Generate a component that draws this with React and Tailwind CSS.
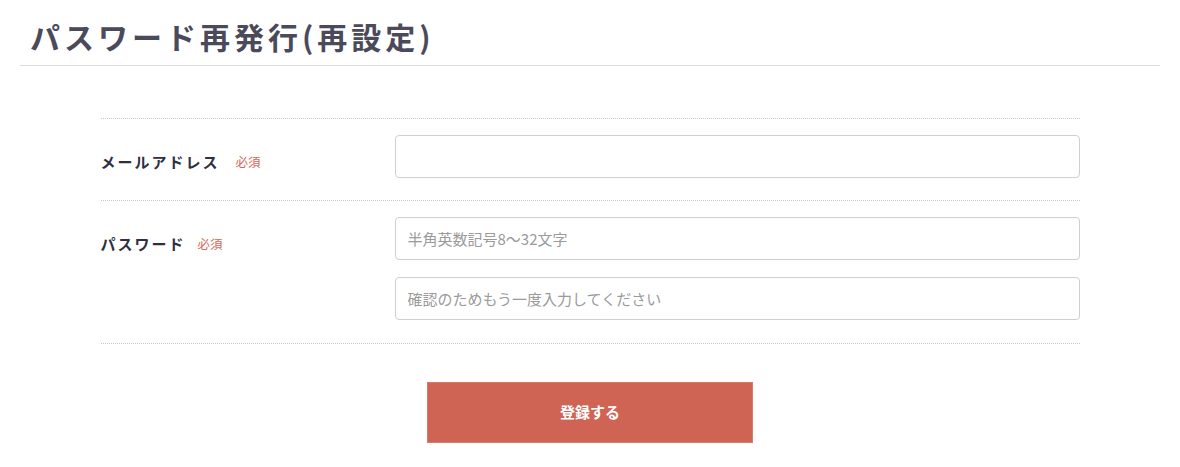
import React from "react"

const font = { fontFamily: '"Noto Sans CJK JP", "Noto Sans", sans-serif' }

export default function App() {
  return (
    <div className="min-h-screen bg-white text-[#2f2f40]" style={font}>

      {/* TITLE */}
      <div className="mx-5 border-b border-[#dcdcdc] pl-[10px] pt-[16px] pb-[9px]">
        <h1 className="text-[30px] font-bold leading-[40px] tracking-[4px] text-[#4a4a5a]">
          パスワード再発行(再設定)
        </h1>
      </div>

      {/* FORM */}
      <div className="mx-auto mt-[52px] w-[979px]">

        <div className="flex border-t border-dotted border-[#c8c8c8] pt-4 pb-[22px]">
          <div className="flex h-[43px] w-[294px] items-center gap-[16px] pt-[11px]">
            <span className="text-[15px] font-bold tracking-[2px]">メールアドレス</span>
            <span className="text-[12.5px] text-[#d5685a]">必須</span>
          </div>
          <input
            className="h-[43px] flex-1 rounded-[4px] border border-[#cfcfcf] px-3 text-[15px] outline-none"
          />
        </div>

        <div className="flex border-t border-b border-dotted border-[#c8c8c8] pt-4 pb-[23px]">
          <div className="flex h-[43px] w-[294px] items-center gap-[12px] pt-[11px]">
            <span className="text-[15px] font-bold tracking-[2px]">パスワード</span>
            <span className="text-[12.5px] text-[#d5685a]">必須</span>
          </div>
          <div className="flex flex-1 flex-col gap-[17px]">
            <input
              placeholder="半角英数記号8〜32文字"
              className="h-[43px] rounded-[4px] border border-[#cfcfcf] px-3 text-[15px] outline-none placeholder:text-[#9a9a9a]"
            />
            <input
              placeholder="確認のためもう一度入力してください"
              className="h-[43px] rounded-[4px] border border-[#cfcfcf] px-3 text-[15px] outline-none placeholder:text-[#9a9a9a]"
            />
          </div>
        </div>

        <div className="flex justify-center pt-[38px]">
          <button className="h-[61px] w-[326px] border border-[#d97a6c] bg-[#cf6455] text-[15px] font-bold text-white">
            登録する
          </button>
        </div>

      </div>
    </div>
  )
}
